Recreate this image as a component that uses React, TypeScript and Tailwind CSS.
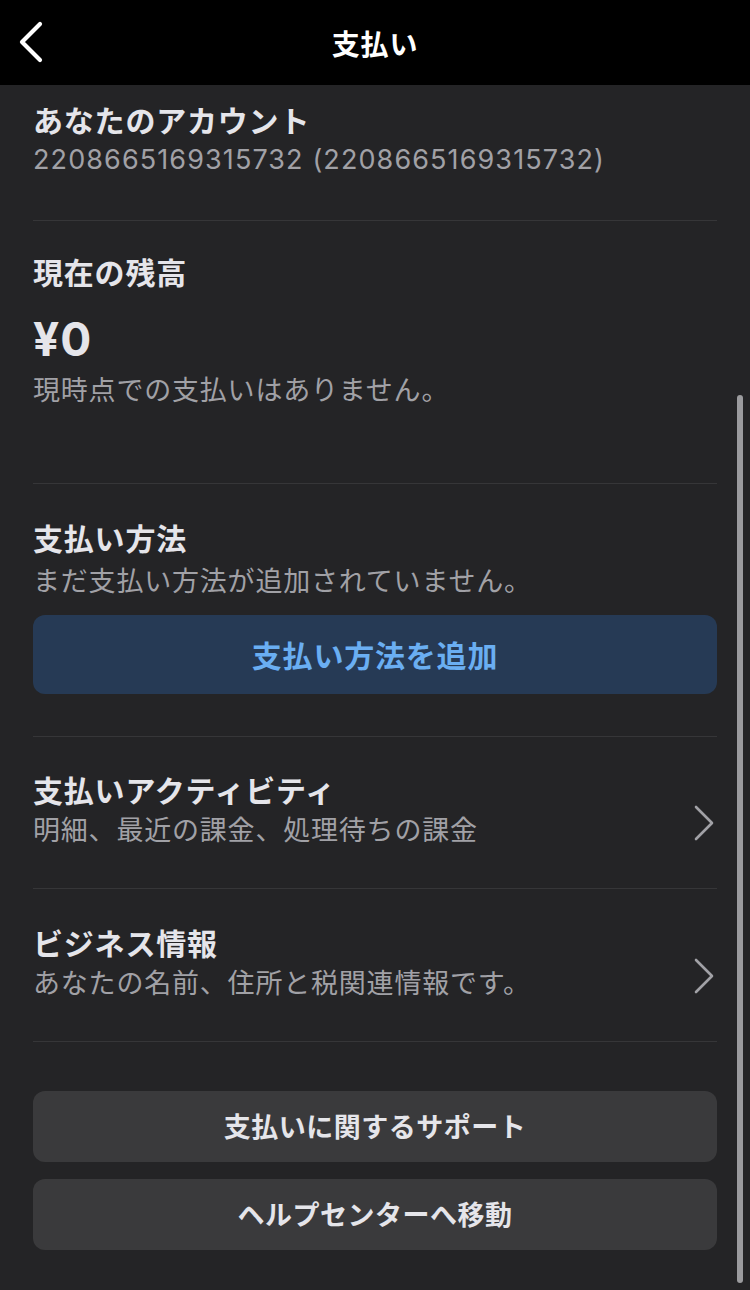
import React from 'react';

const font = { fontFamily: '"Noto Sans CJK JP", "Noto Sans", sans-serif' };

function Chevron() {
  return (
    <svg width="22" height="36" viewBox="0 0 22 36" fill="none" className="shrink-0">
      <path d="M3 2 L19 18 L3 34" stroke="#a1a1a6" strokeWidth="2.6" strokeLinecap="round" strokeLinejoin="round" />
    </svg>
  );
}

function LinkRow({ title, sub, pt }: { title: string; sub: string; pt: string }) {
  return (
    <div className={`flex items-center justify-between border-b border-[#363638] pb-[41px] ${pt}`}>
      <div className="flex flex-col gap-[3px]">
        <div className="text-[30px] leading-[38px] font-bold tracking-[0.8px] text-[#e5e5ea]">{title}</div>
        <div className="text-[27px] leading-[36px] tracking-[0.8px] text-[#a1a1a6]">{sub}</div>
      </div>
      <div className="pr-[2px] pt-[28px]">
        <Chevron />
      </div>
    </div>
  );
}

export default function App() {
  return (
    <div className="relative w-[750px] h-[1290px] bg-[#242426] overflow-hidden" style={font}>
      {/* Header */}
      <div className="relative h-[85px] bg-black flex items-center justify-center">
        <button className="absolute left-[18px] top-[21px]">
          <svg width="26" height="42" viewBox="0 0 26 42" fill="none">
            <path d="M22 3 L4 21 L22 39" stroke="#ffffff" strokeWidth="4.2" strokeLinecap="round" strokeLinejoin="round" />
          </svg>
        </button>
        <h1 className="text-[28px] font-bold tracking-[0.8px] text-white leading-none">支払い</h1>
      </div>

      <div className="px-[33px]">
        {/* Account */}
        <div className="pt-[15px] pb-[42px] border-b border-[#363638] flex flex-col gap-[4px]">
          <div className="text-[30px] leading-[38px] font-bold tracking-[0.8px] text-[#e5e5ea]">あなたのアカウント</div>
          <div className="font-['Inter'] text-[27px] leading-[36px] tracking-[1.1px] text-[#a1a1a6]">2208665169315732 (2208665169315732)</div>
        </div>

        {/* Balance */}
        <div className="pt-[31px] pb-[76px] border-b border-[#363638] flex flex-col">
          <div className="text-[30px] leading-[38px] font-bold tracking-[0.8px] text-[#e5e5ea]">現在の残高</div>
          <div className="mt-[23px] font-['Inter'] text-[46px] leading-[52px] font-bold tracking-[1px] text-[#e5e5ea]">¥0</div>
          <div className="mt-[6px] text-[27px] leading-[36px] tracking-[0.8px] text-[#a1a1a6]">現時点での支払いはありません。</div>
        </div>

        {/* Payment method */}
        <div className="pt-[34px] pb-[42px] border-b border-[#363638] flex flex-col">
          <div className="text-[30px] leading-[38px] font-bold tracking-[0.8px] text-[#e5e5ea]">支払い方法</div>
          <div className="mt-[6px] text-[27px] leading-[36px] tracking-[0.8px] text-[#a1a1a6]">まだ支払い方法が追加されていません。</div>
          <button className="mt-[17px] h-[79px] w-full rounded-[12px] bg-[#263a55] text-[30px] font-bold tracking-[0.8px] text-[#6aaef2]">
            支払い方法を追加
          </button>
        </div>

        <LinkRow pt="pt-[33px]" title="支払いアクティビティ" sub="明細、最近の課金、処理待ちの課金" />
        <LinkRow pt="pt-[34px]" title="ビジネス情報" sub="あなたの名前、住所と税関連情報です。" />

        {/* Support buttons */}
        <div className="pt-[49px] flex flex-col gap-[17px]">
          <button className="h-[71px] w-full rounded-[12px] bg-[#3a3a3c] text-[27px] font-bold tracking-[0.5px] text-[#e5e5ea]">
            支払いに関するサポート
          </button>
          <button className="h-[71px] w-full rounded-[12px] bg-[#3a3a3c] text-[27px] font-bold tracking-[0.5px] text-[#e5e5ea]">
            ヘルプセンターへ移動
          </button>
        </div>
      </div>

      {/* Scroll indicator */}
      <div className="absolute right-[7px] top-[395px] h-[888px] w-[6px] rounded-full bg-[#9b9b9e]" />
    </div>
  );
}
